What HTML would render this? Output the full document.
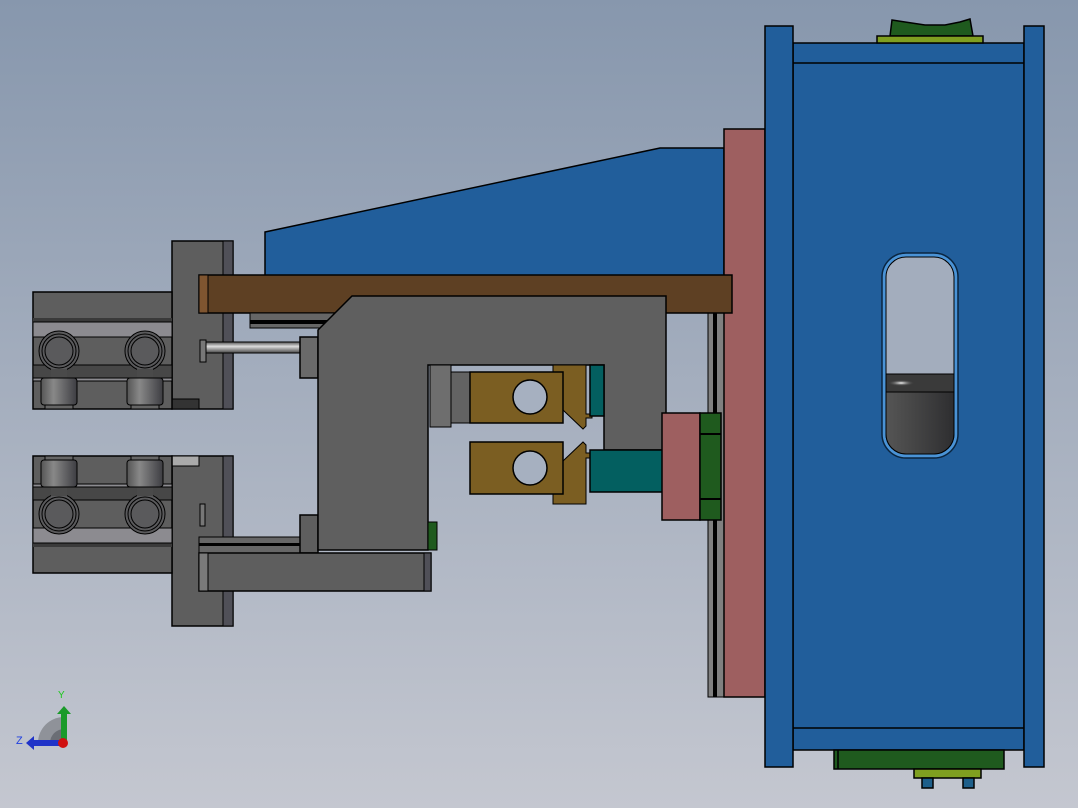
<!DOCTYPE html>
<html><head><meta charset="utf-8"><style>
html,body{margin:0;padding:0;width:1078px;height:808px;overflow:hidden}
svg{display:block}
</style></head><body>
<svg width="1078" height="808" viewBox="0 0 1078 808" xmlns="http://www.w3.org/2000/svg" stroke="#000" stroke-width="1.5">
<defs>
<linearGradient id="bg" x1="0" y1="0" x2="0" y2="1"><stop offset="0" stop-color="#8797ad"/><stop offset="1" stop-color="#c4c7d0"/></linearGradient>
<linearGradient id="rod" x1="0" y1="0" x2="0" y2="1"><stop offset="0" stop-color="#555"/><stop offset=".4" stop-color="#ddd"/><stop offset="1" stop-color="#444"/></linearGradient>
<linearGradient id="rol" x1="0" y1="0" x2="1" y2="0"><stop offset="0" stop-color="#555"/><stop offset=".35" stop-color="#888"/><stop offset="1" stop-color="#3d3d42"/></linearGradient>
<linearGradient id="win" x1="0" y1="0" x2="1" y2="0"><stop offset="0" stop-color="#555"/><stop offset=".3" stop-color="#4a4a4a"/><stop offset="1" stop-color="#2e2e30"/></linearGradient>
<radialGradient id="hl" cx=".3" cy=".5" r=".3"><stop offset="0" stop-color="#fff"/><stop offset="1" stop-color="#444" stop-opacity="0"/></radialGradient>
<g id="cyl">
<rect x="33" y="292" width="139" height="117" fill="#5e5e5e"/>
<rect x="33" y="318" width="139" height="4" fill="#3a3a3a" stroke="none"/>
<rect x="33" y="322" width="139" height="15" fill="#8c8b90" stroke-width="1"/>
<rect x="33" y="365" width="139" height="13" fill="#474747" stroke-width="1"/>
<rect x="33" y="378" width="139" height="3" fill="#8c8b90" stroke-width="1"/>
<g fill="#5a5a5c" stroke-width="1">
<circle cx="59" cy="351" r="20"/><circle cx="59" cy="351" r="17"/><circle cx="59" cy="351" r="14"/>
<circle cx="145" cy="351" r="20"/><circle cx="145" cy="351" r="17"/><circle cx="145" cy="351" r="14"/>
</g>
<rect x="51" y="369" width="16" height="10" fill="#4a4a4a" stroke="none"/>
<rect x="137" y="369" width="16" height="10" fill="#4a4a4a" stroke="none"/>
<rect x="41" y="378" width="36" height="27" rx="3" fill="url(#rol)" stroke-width="1"/>
<rect x="127" y="378" width="36" height="27" rx="3" fill="url(#rol)" stroke-width="1"/>
<rect x="45" y="405" width="28" height="4" fill="#666" stroke-width="1"/>
<rect x="131" y="405" width="28" height="4" fill="#666" stroke-width="1"/>
</g>
</defs>
<rect width="1078" height="808" fill="url(#bg)" stroke="none"/>

<polygon points="265,232 660,148 724,148 724,276 265,276" fill="#215e9b"/>
<rect x="708" y="312" width="16" height="385" fill="#808080" stroke-width="1"/>
<rect x="713" y="312" width="4" height="385" fill="#000" stroke="none"/>
<rect x="724" y="129" width="41" height="568" fill="#9e5f60"/>
<rect x="793" y="43" width="231" height="707" fill="#215e9b"/>
<line x1="793" y1="63" x2="1024" y2="63"/>
<line x1="793" y1="728" x2="1024" y2="728"/>
<rect x="765" y="26" width="28" height="741" fill="#215e9b"/>
<rect x="1024" y="26" width="20" height="741" fill="#215e9b"/>
<path d="M892,20 L905,22 L925,25 L945,25 L960,22 L970,19 L973,36 L890,36 Z" fill="#1f5a1e"/>
<rect x="877" y="36" width="106" height="7" fill="#7f9f20"/>
<rect x="834" y="750" width="170" height="19" fill="#1f5a1e"/>
<line x1="838" y1="750" x2="838" y2="769"/>
<rect x="914" y="769" width="67" height="9" fill="#7f9f20"/>
<rect x="922" y="778" width="11" height="10" fill="#1e5f8a"/>
<rect x="963" y="778" width="11" height="10" fill="#1e5f8a"/>
<rect x="882" y="253" width="76" height="205" rx="24" fill="#4a93d6" stroke="#0a2540"/>
<rect x="886" y="257" width="68" height="197" rx="20" fill="#a3adbd" stroke="#000" stroke-width="1"/>
<path d="M886,374 L954,374 L954,434 A20,20 0 0 1 934,454 L906,454 A20,20 0 0 1 886,434 Z" fill="url(#win)" stroke-width="1"/>
<rect x="886" y="374" width="68" height="18" fill="#3a3a3a" stroke-width="1"/>
<ellipse cx="910" cy="383" rx="22" ry="5" fill="url(#hl)" stroke="none"/>

<rect x="172" y="241" width="61" height="168" fill="#5e5e5e"/>
<rect x="223" y="241" width="10" height="168" fill="#505058" stroke-width="1"/>
<rect x="172" y="399" width="27" height="10" fill="#333" stroke-width="1"/>
<rect x="172" y="456" width="61" height="170" fill="#5e5e5e"/>
<rect x="223" y="456" width="10" height="170" fill="#505058" stroke-width="1"/>
<rect x="172" y="456" width="27" height="10" fill="#aaa" stroke-width="1"/>
<use href="#cyl"/>
<use href="#cyl" transform="translate(0,865) scale(1,-1)"/>

<rect x="199" y="275" width="533" height="38" fill="#5e4023"/>
<rect x="199" y="275" width="9" height="38" fill="#7f5530" stroke-width="1"/>
<rect x="250" y="313" width="85" height="15" fill="#666" stroke-width="1"/>
<rect x="250" y="320" width="85" height="4" fill="#000" stroke="none"/>
<rect x="200" y="340" width="6" height="22" fill="#777" stroke-width="1"/>
<rect x="206" y="342" width="94" height="11" fill="url(#rod)" stroke-width="1"/>
<rect x="300" y="337" width="18" height="41" fill="#6a6a6a"/>
<rect x="200" y="504" width="5" height="22" fill="#777" stroke-width="1"/>
<rect x="199" y="537" width="115" height="16" fill="#666" stroke-width="1"/>
<rect x="199" y="543" width="115" height="3" fill="#000" stroke="none"/>
<rect x="300" y="515" width="18" height="38" fill="#5e5e5e"/>
<rect x="199" y="553" width="232" height="38" fill="#5e5e5e"/>
<rect x="199" y="553" width="9" height="38" fill="#7a7a7a" stroke-width="1"/>
<rect x="424" y="553" width="7" height="38" fill="#505058" stroke-width="1"/>
<path d="M352,296 L666,296 L666,450 L604,450 L604,365 L428,365 L428,550 L318,550 L318,330 Z" fill="#5f5f5f"/>
<rect x="428" y="522" width="9" height="28" fill="#1f5a1e" stroke-width="1"/>
<rect x="430" y="365" width="21" height="62" fill="#6e6e6e" stroke-width="1"/>
<rect x="451" y="372" width="19" height="51" fill="#636363" stroke-width="1"/>

<!-- brown vertical pieces with chevrons -->
<polygon points="553,365 586,365 586,414 592,414 592,418 586,418 586,426 583,429 563,410 563,372 553,372" fill="#7b5e22" stroke-width="1"/>
<polygon points="553,504 586,504 586,458 592,458 592,453 586,453 586,445 583,442 563,461 563,494 553,494" fill="#7b5e22" stroke-width="1"/>
<rect x="470" y="372" width="93" height="51" fill="#7b5e22"/>
<circle cx="530" cy="397" r="17" fill="#a6b0c0"/>
<rect x="470" y="442" width="93" height="52" fill="#7b5e22"/>
<circle cx="530" cy="468" r="17" fill="#a6b0c0"/>
<rect x="590" y="365" width="14" height="51" fill="#035f60"/>
<rect x="590" y="450" width="76" height="42" fill="#035f60"/>
<rect x="662" y="413" width="38" height="107" fill="#9e5f60"/>
<rect x="700" y="413" width="21" height="107" fill="#1f5a1e"/>
<line x1="700" y1="434" x2="721" y2="434" stroke-width="2"/>
<line x1="700" y1="499" x2="721" y2="499" stroke-width="2"/>

<g stroke="none">
<path d="M38,743 A26,26 0 0 1 64,717 L64,743 Z" fill="#8f9299"/>
<path d="M50,743 A14,14 0 0 1 64,729 L64,743 Z" fill="#6b6e75"/>
<rect x="61" y="713" width="6" height="28" fill="#1a9a2a"/>
<polygon points="57,714 64,706 71,714" fill="#1a9a2a"/>
<rect x="34" y="740" width="28" height="6" fill="#2033c8"/>
<polygon points="34,736 26,743 34,750" fill="#2033c8"/>
<circle cx="63" cy="743" r="5" fill="#d01010"/>
<text x="58" y="698" font-family="Liberation Sans, sans-serif" font-size="10" fill="#1cc81c">Y</text>
<text x="16" y="744" font-family="Liberation Sans, sans-serif" font-size="11" fill="#2040e0">Z</text>
</g>
</svg>
</body></html>
